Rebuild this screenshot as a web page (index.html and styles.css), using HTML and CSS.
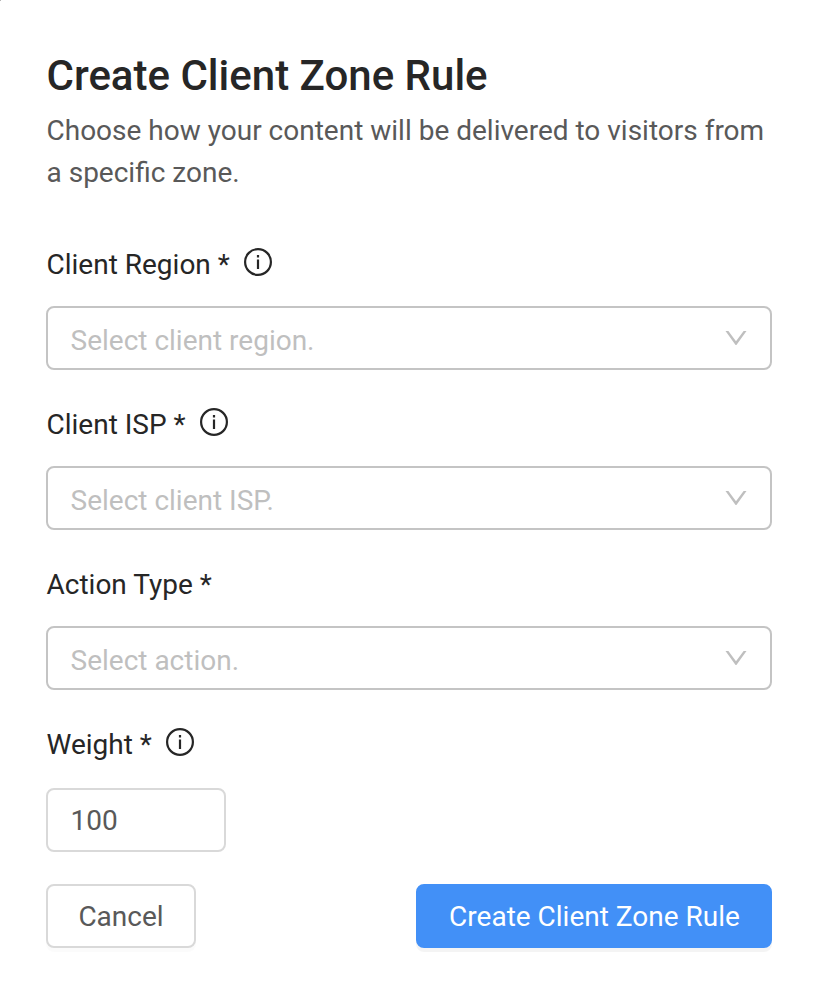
FILE: index.html
```html
<!DOCTYPE html>
<html lang="en">
<head>
<meta charset="utf-8">
<title>Create Client Zone Rule</title>
<link rel="stylesheet" href="styles.css">
</head>
<body>
<form class="dialog">
  <h1 class="title">Create Client Zone Rule</h1>
  <p class="intro">Choose how your content will be delivered to visitors from a specific zone.</p>
  <div class="field">
    <div class="label"><span>Client Region *</span><svg class="info" viewBox="0 0 28 28"><circle cx="14" cy="14" r="12.9"/><path d="M14 11.500v9.500"/><path d="M14 7v2.500"/></svg></div>
    <div class="select"><span>Select client region.</span><svg class="chevron" viewBox="0 0 22 16"><path d="M0.500 1H3.400L11 11.200L18.600 1H21.500L11.800 14.400Q11 15.400 10.200 14.400Z"/></svg></div>
  </div>
  <div class="field">
    <div class="label"><span>Client ISP *</span><svg class="info" viewBox="0 0 28 28"><circle cx="14" cy="14" r="12.9"/><path d="M14 11.500v9.500"/><path d="M14 7v2.500"/></svg></div>
    <div class="select"><span>Select client ISP.</span><svg class="chevron" viewBox="0 0 22 16"><path d="M0.500 1H3.400L11 11.200L18.600 1H21.500L11.800 14.400Q11 15.400 10.200 14.400Z"/></svg></div>
  </div>
  <div class="field">
    <div class="label"><span>Action Type *</span></div>
    <div class="select"><span>Select action.</span><svg class="chevron" viewBox="0 0 22 16"><path d="M0.500 1H3.400L11 11.200L18.600 1H21.500L11.800 14.400Q11 15.400 10.200 14.400Z"/></svg></div>
  </div>
  <div class="field weight">
    <div class="label"><span>Weight *</span><svg class="info" viewBox="0 0 28 28"><circle cx="14" cy="14" r="12.9"/><path d="M14 11.500v9.500"/><path d="M14 7v2.500"/></svg></div>
    <div class="number">100</div>
  </div>
  <div class="actions">
    <button type="button" class="button">Cancel</button>
    <button type="button" class="button primary">Create Client Zone Rule</button>
  </div>
</form>
</body>
</html>
```
FILE: styles.css
```css
* { box-sizing: border-box; }
body { margin: 0; background: #fff; color: #262626; font-family: Roboto, sans-serif; font-size: 28px; -webkit-font-smoothing: antialiased; }
.dialog { width: 816px; height: 992px; padding: 48px 44px 0 46px; background: linear-gradient(#b5b5b5, #b5b5b5) 0 0 / 1px 1px no-repeat; }
.title { margin: 0; padding-left: 0.5px; font-size: 42px; line-height: 56px; font-weight: 500; }
.intro { margin: 6px 0 0; padding-left: 0.5px; line-height: 42px; color: #595959; }
.field { height: 160px; }
.intro + .field { margin-top: 48px; }
.label { display: flex; height: 64px; padding: 6px 0 0 0.5px; line-height: 34px; }
.info { width: 28px; height: 28px; margin-left: 14.5px; fill: none; stroke: #262626; stroke-width: 2.2; }
.select { display: flex; align-items: center; justify-content: space-between; height: 64px; padding: 4px 23px 0 22.5px; border: 2px solid #c4c4c4; border-radius: 8px; color: #bfbfbf; }
.chevron { width: 22px; height: 16px; margin-top: -4px; fill: #bfbfbf; }
.weight { height: 162px; }
.weight .label { height: 66px; }
.number { width: 180px; height: 64px; padding-left: 22.5px; line-height: 61px; border: 2px solid #d9d9d9; border-radius: 8px; color: #595959; }
.actions { display: flex; justify-content: space-between; }
.button { width: 150px; height: 64px; padding: 0; border: 2px solid #d9d9d9; border-radius: 8px; background: #fff; color: #595959; font: inherit; box-shadow: 0 4px 0 rgba(0, 0, 0, 0.016); }
.primary { width: 356px; padding-left: 1px; background: #4290f7; border-color: #4290f7; color: #fff; box-shadow: 0 4px 0 rgba(0, 0, 0, 0.045); }
```
